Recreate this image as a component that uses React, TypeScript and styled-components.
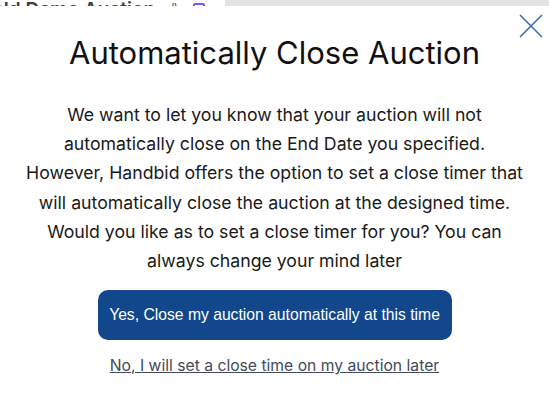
import React from "react";
import styled, { createGlobalStyle } from "styled-components";

const GlobalStyle = createGlobalStyle`
  * { box-sizing: border-box; }
  body {
    margin: 0;
    background: #ffffff;
    font-family: Inter, "Noto Sans", sans-serif;
    overflow: hidden;
  }
`;

const Page = styled.div`
  width: 549px;
  height: 402px;
  display: flex;
  flex-direction: column;
  background: #ffffff;
`;

const Backdrop = styled.div`
  height: 6px;
  overflow: hidden;
  display: flex;
  align-items: flex-end;
  gap: 14px;
  background: linear-gradient(to right, #ffffff 0, #ffffff 225px, #e4e4e4 225px);
`;

const BackTitle = styled.span`
  font-size: 19px;
  font-weight: 600;
  color: #3b3f47;
  line-height: 20px;
  margin-bottom: -14px;
  margin-left: -22px;
  white-space: nowrap;
`;

const BackMark = styled.span`
  font-size: 14px;
  color: #555a66;
  line-height: 14px;
  margin-bottom: -10px;
`;

const BackIcon = styled.span`
  width: 12px;
  height: 14px;
  margin-bottom: -11px;
  border: 2px solid #6a5cff;
  border-radius: 2px;
`;

const Modal = styled.div`
  flex: 1;
  display: flex;
  flex-direction: column;
  align-items: center;
  padding: 27px 10px 0;
  position: relative;
`;

const CloseButton = styled.button`
  position: absolute;
  top: 7px;
  right: 5px;
  width: 26px;
  height: 26px;
  padding: 0;
  border: none;
  background: none;
  cursor: pointer;
`;

const Title = styled.h1`
  margin: 0;
  font-size: 31px;
  font-weight: 400;
  line-height: 40px;
  color: #111111;
`;

const Body = styled.p`
  margin: 27px 0 0;
  text-align: center;
  font-size: 17.7px;
  line-height: 29.2px;
  color: #1a1a1a;
  white-space: nowrap;
`;

const PrimaryButton = styled.button`
  margin-top: 15px;
  width: 354px;
  height: 50px;
  border: none;
  border-radius: 10px;
  background: #12478c;
  color: #ffffff;
  font-family: "Liberation Sans", Arial, sans-serif;
  font-size: 15.7px;
  cursor: pointer;
`;

const LaterLink = styled.a`
  margin-top: 16px;
  font-size: 15.7px;
  color: #434a59;
  text-decoration: underline;
  cursor: pointer;
`;

const App = () => {
  return (
    <Page>
      <GlobalStyle />
      <Backdrop>
        <BackTitle>Gold Demo Auction</BackTitle>
        <BackMark>/\</BackMark>
        <BackIcon />
      </Backdrop>
      <Modal>
        <CloseButton aria-label="Close">
          <svg width="26" height="26" viewBox="0 0 26 26">
            <path d="M2 2 L24 24 M24 2 L2 24" stroke="#3b6db3" strokeWidth="1.6" fill="none" />
          </svg>
        </CloseButton>
        <Title>Automatically Close Auction</Title>
        <Body>
          We want to let you know that your auction will not
          <br />
          automatically close on the End Date you specified.
          <br />
          However, Handbid offers the option to set a close timer that
          <br />
          will automatically close the auction at the designed time.
          <br />
          Would you like as to set a close timer for you? You can
          <br />
          always change your mind later
        </Body>
        <PrimaryButton>Yes, Close my auction automatically at this time</PrimaryButton>
        <LaterLink>No, I will set a close time on my auction later</LaterLink>
      </Modal>
    </Page>
  );
};

export default App;
